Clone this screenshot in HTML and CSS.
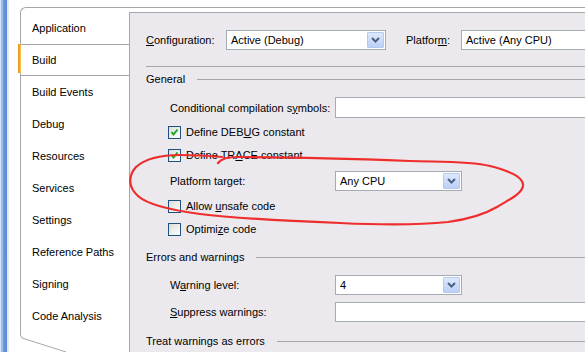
FILE: index.html
```html
<!DOCTYPE html>
<html lang="en">
<head>
  <meta charset="UTF-8" />
  <title>Build - Project Properties</title>
  <link rel="stylesheet" href="styles.css">
</head>
<body>
  <div class="edge"></div>

  <div class="designer">
    <div class="frame">
      <!-- side tabs -->
      <ul class="tabs">
        <li class="tab">Application</li>
        <li class="tab active">Build</li>
        <li class="tab">Build Events</li>
        <li class="tab">Debug</li>
        <li class="tab">Resources</li>
        <li class="tab">Services</li>
        <li class="tab">Settings</li>
        <li class="tab">Reference Paths</li>
        <li class="tab">Signing</li>
        <li class="tab">Code Analysis</li>
        <li class="tab-foot">
          <svg width="110" height="17" viewBox="0 0 110 17">
            <polygon points="0,0 0,17 48,17" fill="#fff" />
            <polyline points="0.5,0 2,3 46,17" fill="none" stroke="#a7a6aa" />
          </svg>
        </li>
      </ul>

      <!-- build page -->
      <div class="panel">
        <div class="row config">
          <label class="lbl-config"><u>C</u>onfiguration:</label>
          <div class="combo w160">
            <span>Active (Debug)</span>
            <i class="drop"><svg width="9" height="6" viewBox="0 0 9 6"><path d="M1 1 L4.5 4.5 L8 1" fill="none" stroke="#4d6185" stroke-width="2" /></svg></i>
          </div>
          <label class="lbl-platform">Platfor<u>m</u>:</label>
          <div class="combo w160">
            <span>Active (Any CPU)</span>
            <i class="drop"><svg width="9" height="6" viewBox="0 0 9 6"><path d="M1 1 L4.5 4.5 L8 1" fill="none" stroke="#4d6185" stroke-width="2" /></svg></i>
          </div>
        </div>

        <hr class="sep">

        <div class="group">General</div>

        <div class="row item field-row first">
          <label class="lbl">Conditional compilation s<u>y</u>mbols:</label>
          <div class="text h21"></div>
        </div>

        <div class="row check first-check">
          <span class="box"><svg width="11" height="11" viewBox="0 0 11 11"><path d="M2.5 5 L4.5 7.5 L8.5 2.5" fill="none" stroke="#21a121" stroke-width="2" /></svg></span>
          <span>Define DEB<u>U</u>G constant</span>
        </div>
        <div class="row check">
          <span class="box"><svg width="11" height="11" viewBox="0 0 11 11"><path d="M2.5 5 L4.5 7.5 L8.5 2.5" fill="none" stroke="#21a121" stroke-width="2" /></svg></span>
          <span>Define TR<u>A</u>CE constant</span>
        </div>

        <div class="row item field-row target">
          <label class="lbl">Platform target:</label>
          <div class="combo w127">
            <span>Any CPU</span>
            <i class="drop"><svg width="9" height="6" viewBox="0 0 9 6"><path d="M1 1 L4.5 4.5 L8 1" fill="none" stroke="#4d6185" stroke-width="2" /></svg></i>
          </div>
        </div>

        <div class="row check">
          <span class="box"></span>
          <span>Allow <u>u</u>nsafe code</span>
        </div>
        <div class="row check">
          <span class="box"></span>
          <span>Optimi<u>z</u>e code</span>
        </div>

        <div class="group errors">Errors and warnings</div>

        <div class="row item field-row level">
          <label class="lbl">W<u>a</u>rning level:</label>
          <div class="combo w127">
            <span>4</span>
            <i class="drop"><svg width="9" height="6" viewBox="0 0 9 6"><path d="M1 1 L4.5 4.5 L8 1" fill="none" stroke="#4d6185" stroke-width="2" /></svg></i>
          </div>
        </div>
        <div class="row item field-row suppress">
          <label class="lbl"><u>S</u>uppress warnings:</label>
          <div class="text"></div>
        </div>

        <div class="group treat">Treat warnings as errors</div>
      </div>
    </div>
  </div>

  <!-- red marker scribble drawn over the screenshot -->
  <svg class="scribble" width="585" height="352" viewBox="0 0 585 352">
    <path d="M218,163 C221,159 226,157 240,157 C300,157 360,159 410,161 C440,162 470,161 490,166 C510,171 524,178 523,186 C521,195 508,200 497,207 C485,214 470,219 448,222 C420,225 380,225 340,223 C290,221 240,219 200,214 C170,210 148,205 138,196 C128,187 128,176 136,167 C145,159 160,155 180,155 C195,155 210,156 222,157"
          fill="none" stroke="#ef2d2d" stroke-width="2.2" stroke-linecap="round" stroke-linejoin="round" />
  </svg>
</body>
</html>
```

FILE: styles.css
```css
body {
  margin: 0;
  height: 352px;
  display: flex;
  overflow: hidden;
  position: relative;
  background: #fff;
  font-family: "Liberation Sans", Arial, sans-serif;
  font-size: 11px;
  color: #000;
}

.edge {
  width: 7px;
  flex-shrink: 0;
  border-right: 2px solid #e9e9e9;
  background: linear-gradient(to right, #d4e2f9 0, #d4e2f9 1px, #9ebcef 1px, #9ebcef 3px, #7199e2 3px, #5b86d6 7px);
}

.designer {
  flex: 1;
  min-width: 0;
  padding: 7px 0 0 11px;
}

.frame {
  display: flex;
  height: 345px;
  box-sizing: border-box;
  border-top: 1px solid #a7a6aa;
  border-left: 1px solid #a7a6aa;
  border-top-left-radius: 6px;
}

/* side tabs */
.tabs {
  list-style: none;
  margin: 0;
  padding: 4px 0 0;
  width: 108px;
  flex-shrink: 0;
  display: flex;
  flex-direction: column;
}

.tab {
  height: 32px;
  line-height: 32px;
  padding-left: 11px;
  box-sizing: border-box;
  position: relative;
}

.tab.active {
  line-height: 30px;
  border-top: 1px solid #a7a6aa;
  border-bottom: 1px solid #a7a6aa;
}

.tab.active::before {
  content: "";
  position: absolute;
  left: -3px;
  top: -1px;
  bottom: 2px;
  width: 3px;
  background: linear-gradient(to right, #e68a1e, #ffc84b);
}

.tab-foot {
  margin-top: auto;
  margin-left: -1px;
  height: 17px;
}

.tab-foot svg {
  display: block;
}

/* build page */
.panel {
  flex: 1;
  min-width: 0;
  overflow: hidden;
  margin-top: 4px;
  border-top: 1px solid #a7a6aa;
  border-left: 1px solid #a7a6aa;
  background: #ebe9ed;
  padding: 17px 0 0 16px;
}

.row {
  display: flex;
  align-items: center;
  white-space: nowrap;
}

.config {
  height: 20px;
}

.lbl-config {
  width: 80px;
  flex-shrink: 0;
}

.lbl-platform {
  width: 55px;
  margin-left: 20px;
  flex-shrink: 0;
}

.combo {
  display: flex;
  height: 20px;
  box-sizing: border-box;
  border: 1px solid #a5acb2;
  background: #fff;
  flex-shrink: 0;
}

.combo span {
  flex: 1;
  padding-left: 4px;
  line-height: 18px;
}

.w160 { width: 160px; }
.w127 { width: 127px; }

.drop {
  width: 17px;
  margin: 1px 1px 1px 0;
  box-sizing: border-box;
  border: 1px solid #b5c8ee;
  border-radius: 1px;
  background: linear-gradient(#dde8fb, #bcd0f6);
  display: flex;
  align-items: center;
  justify-content: center;
}

.drop svg {
  display: block;
}

.sep {
  margin: 16px 0 0;
  border: 0;
  border-top: 1px solid #a7a6aa;
}

.group {
  display: flex;
  align-items: center;
  height: 16px;
  margin-top: 4px;
  white-space: nowrap;
}

.group::after {
  content: "";
  flex: 1;
  border-top: 1px solid #a7a6aa;
  margin-left: 12px;
}

.group.errors { margin-top: 12px; }
.group.treat { margin-top: 11px; }

.item {
  margin-left: 24px;
}

.field-row {
  height: 20px;
  margin-top: 8px;
}

.field-row.first {
  height: 21px;
  margin-top: 10px;
}

.field-row.level { margin-top: 10px; }
.field-row.suppress { margin-top: 7px; }

.lbl {
  width: 165px;
  flex-shrink: 0;
}

.text {
  width: 300px;
  height: 20px;
  flex-shrink: 0;
  box-sizing: border-box;
  border: 1px solid #a5acb2;
  background: #fff;
}

.text.h21 {
  height: 21px;
}

.check {
  height: 16px;
  margin: 7px 0 0 22px;
}

.check.first-check {
  margin-top: 6px;
}

.box {
  width: 13px;
  height: 13px;
  box-sizing: border-box;
  border: 1px solid #1c5180;
  background: linear-gradient(135deg, #dcdcd7, #fff);
  margin-right: 5px;
  flex-shrink: 0;
}

.box svg {
  display: block;
}

.scribble {
  position: absolute;
  left: 0;
  top: 0;
  pointer-events: none;
}
```
